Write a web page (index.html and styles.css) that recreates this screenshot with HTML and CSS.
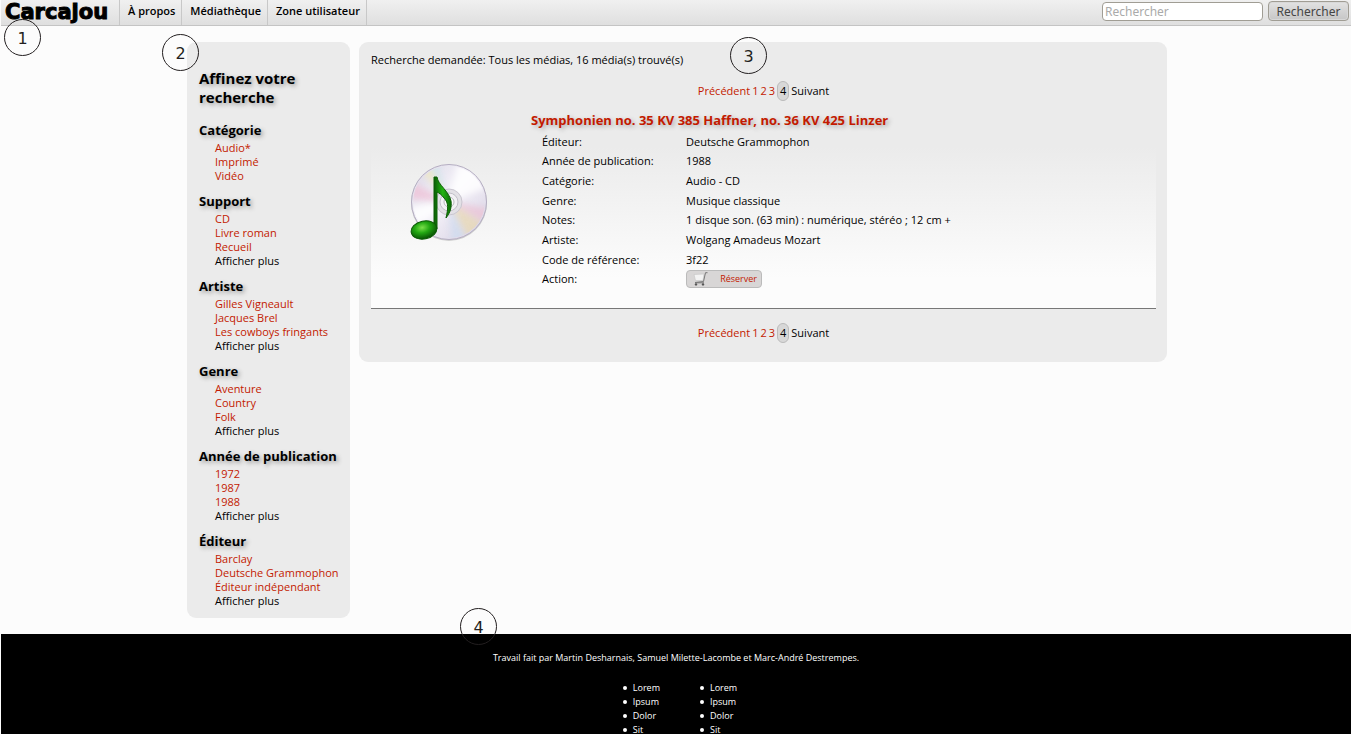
FILE: index.html
```html
<!DOCTYPE html>
<html lang="fr">
<head>
<meta charset="utf-8">
<title>Carcajou - Médiathèque</title>
<link rel="stylesheet" href="styles.css">
</head>
<body>
<header class="topbar">
  <a class="logo" href="#">Carcajou</a>
  <nav class="menu">
    <a href="#">À propos</a>
    <a href="#">Médiathèque</a>
    <a href="#">Zone utilisateur</a>
  </nav>
  <form class="search">
    <input type="search" placeholder="Rechercher" aria-label="Rechercher">
    <button type="button">Rechercher</button>
  </form>
  <span class="pin pin-header">1</span>
</header>

<div class="page">
  <aside class="filters">
    <span class="pin pin-filters">2</span>
    <h2>Affinez votre recherche</h2>
    <section>
      <h3>Catégorie</h3>
      <ul>
        <li><a href="#">Audio*</a></li>
        <li><a href="#">Imprimé</a></li>
        <li><a href="#">Vidéo</a></li>
      </ul>
    </section>
    <section>
      <h3>Support</h3>
      <ul>
        <li><a href="#">CD</a></li>
        <li><a href="#">Livre roman</a></li>
        <li><a href="#">Recueil</a></li>
        <li><a class="more" href="#">Afficher plus</a></li>
      </ul>
    </section>
    <section>
      <h3>Artiste</h3>
      <ul>
        <li><a href="#">Gilles Vigneault</a></li>
        <li><a href="#">Jacques Brel</a></li>
        <li><a href="#">Les cowboys fringants</a></li>
        <li><a class="more" href="#">Afficher plus</a></li>
      </ul>
    </section>
    <section>
      <h3>Genre</h3>
      <ul>
        <li><a href="#">Aventure</a></li>
        <li><a href="#">Country</a></li>
        <li><a href="#">Folk</a></li>
        <li><a class="more" href="#">Afficher plus</a></li>
      </ul>
    </section>
    <section>
      <h3>Année de publication</h3>
      <ul>
        <li><a href="#">1972</a></li>
        <li><a href="#">1987</a></li>
        <li><a href="#">1988</a></li>
        <li><a class="more" href="#">Afficher plus</a></li>
      </ul>
    </section>
    <section>
      <h3>Éditeur</h3>
      <ul>
        <li><a href="#">Barclay</a></li>
        <li><a href="#">Deutsche Grammophon</a></li>
        <li><a href="#">Éditeur indépendant</a></li>
        <li><a class="more" href="#">Afficher plus</a></li>
      </ul>
    </section>
  </aside>

  <main class="results">
    <span class="pin pin-results">3</span>
    <p class="summary">Recherche demandée: Tous les médias, 16 média(s) trouvé(s)</p>
    <nav class="pager" aria-label="Pages">
      <a href="#">Précédent</a><a href="#">1</a><a href="#">2</a><a href="#">3</a><span class="current">4</span><span>Suivant</span>
    </nav>
    <article class="media">
      <div class="cover">
        <svg width="80" height="82" viewBox="0 0 80 82" aria-hidden="true">
          <defs>
            <linearGradient id="disc" x1="0" y1="0" x2="1" y2="1">
              <stop offset="0" stop-color="#d9d5e4"/>
              <stop offset=".45" stop-color="#f6f4fa"/>
              <stop offset="1" stop-color="#d3cce0"/>
            </linearGradient>
            <linearGradient id="note" x1="0" y1="0" x2="1" y2="0">
              <stop offset="0" stop-color="#0b5c05"/>
              <stop offset=".5" stop-color="#22b310"/>
              <stop offset="1" stop-color="#0b6a05"/>
            </linearGradient>
            <radialGradient id="head" cx=".45" cy=".35" r=".65">
              <stop offset="0" stop-color="#7be04a"/>
              <stop offset=".45" stop-color="#22a812"/>
              <stop offset="1" stop-color="#064f03"/>
            </radialGradient>
            <filter id="soft" x="-20%" y="-20%" width="140%" height="140%"><feGaussianBlur stdDeviation="3"/></filter>
            <clipPath id="round"><circle cx="39" cy="39" r="36"/></clipPath>
          </defs>
          <circle cx="39" cy="40" r="38" fill="#000" opacity=".16"/>
          <circle cx="39" cy="39" r="37.500" fill="url(#disc)" stroke="#b5aec2"/>
          <g clip-path="url(#round)"><g filter="url(#soft)" opacity=".8">
            <path d="M39 39 0 18 0 36Z" fill="#eec3d8"/>
            <path d="M39 39 9 5 18 0Z" fill="#f2e9bd"/>
            <path d="M39 39 17 0 27 0Z" fill="#cfe5ec"/>
            <path d="M39 39 48 0 78 8 78 24Z" fill="#fff"/>
            <path d="M39 39 80 46 80 62Z" fill="#ecc4d6"/>
            <path d="M39 39 76 62 60 80Z" fill="#e8d9b6"/>
            <path d="M39 39 58 80 42 80Z" fill="#cfdcef"/>
            <path d="M39 39 0 44 0 66Z" fill="#fff"/>
          </g></g>
          <circle cx="39" cy="39" r="13" fill="#e3e1e6" stroke="#cac6d0"/>
          <circle cx="39" cy="39" r="9" fill="#f2f1f4" stroke="#c2bfc8"/>
          <circle cx="39" cy="39" r="5" fill="#fdfdfd" stroke="#b8b5bd"/>
          <path d="M24 14h3c1 8 12 14 14 24 1 6-1 12-5 17 2-9 3-15-2-20-2-3-5-5-7-6v37h-3Z" fill="url(#note)" stroke="#0c5d06"/>
          <ellipse cx="14" cy="67" rx="13" ry="9" fill="url(#head)" stroke="#0a5a04" transform="rotate(-12 14 67)"/>
        </svg>
      </div>
      <div class="details">
        <h1><a href="#">Symphonien no. 35 KV 385 Haffner, no. 36 KV 425 Linzer</a></h1>
        <table>
          <tr><th scope="row">Éditeur:</th><td>Deutsche Grammophon</td></tr>
          <tr><th scope="row">Année de publication:</th><td>1988</td></tr>
          <tr><th scope="row">Catégorie:</th><td>Audio - CD</td></tr>
          <tr><th scope="row">Genre:</th><td>Musique classique</td></tr>
          <tr><th scope="row">Notes:</th><td>1 disque son. (63 min) : numérique, stéréo ; 12 cm +</td></tr>
          <tr><th scope="row">Artiste:</th><td>Wolgang Amadeus Mozart</td></tr>
          <tr><th scope="row">Code de référence:</th><td>3f22</td></tr>
          <tr><th scope="row">Action:</th><td>
            <button class="reserve" type="button">
              <svg width="15" height="14" viewBox="0 0 15 14" aria-hidden="true">
                <path d="M1 2.500 11 2 10 8.500H2.500Z" fill="#f3f3f3" stroke="#c4c4c4" stroke-width=".6"/>
                <path d="M14.500.7h-2L10.500 9.500 2 10.500M2 10.800h9" fill="none" stroke="#777"/>
                <circle cx="3" cy="12.400" r="1.200" fill="#555"/>
                <circle cx="10" cy="12.400" r="1.200" fill="#555"/>
              </svg>
              Réserver
            </button></td></tr>
        </table>
      </div>
    </article>
    <nav class="pager" aria-label="Pages, bas">
      <a href="#">Précédent</a><a href="#">1</a><a href="#">2</a><a href="#">3</a><span class="current">4</span><span>Suivant</span>
    </nav>
  </main>
</div>

<footer class="footer">
  <span class="pin pin-footer">4</span>
  <p>Travail fait par Martin Desharnais, Samuel Milette-Lacombe et Marc-André Destrempes.</p>
  <div class="columns">
    <ul><li>Lorem</li><li>Ipsum</li><li>Dolor</li><li>Sit</li></ul>
    <ul><li>Lorem</li><li>Ipsum</li><li>Dolor</li><li>Sit</li></ul>
  </div>
</footer>
</body>
</html>
```
FILE: styles.css
```css
* { box-sizing: border-box; }

body {
  margin: 0;
  padding-left: 1px;
  background: #fcfcfc;
  color: #000;
  font: 11px/14px "Trebuchet MS", "Open Sans", sans-serif;
}

h1, h2, h3, p, ul { margin: 0; padding: 0; }
a { color: #c31a00; text-decoration: none; }

.topbar {
  position: relative;
  display: flex;
  align-items: stretch;
  height: 26px;
  border-bottom: 1px solid #c4c4c4;
  background: linear-gradient(#f0f0f0, #dfdfdf);
}
.logo {
  width: 119px;
  padding-left: 4px;
  border-right: 1px solid #c8c8c8;
  color: #000;
  font: bold 21px/24px "DejaVu Sans", sans-serif;
  -webkit-text-stroke: 1px #000;
}
.menu { display: flex; }
.menu a {
  padding: 0 6px 0 8px;
  border-right: 1px solid #c8c8c8;
  color: #000;
  font-weight: 600;
  line-height: 22px;
}
.search {
  display: flex;
  gap: 5px;
  margin-left: auto;
  padding: 1px 2px 3px 0;
}
.search input, .search button {
  border: 1px solid #a09d94;
  border-radius: 4px;
  font: 12px/16px "Noto Sans", sans-serif;
}
.search input {
  width: 161px;
  height: 19px;
  margin-top: 1px;
  padding: 0 2px;
  background: #fff;
}
.search input::placeholder { color: #aaa; }
.search button {
  width: 81px;
  height: 20px;
  padding: 1px 0 0;
  background: linear-gradient(#e2e2e2, #c6c6c6);
  box-shadow: inset 0 0 0 1px #d8d8d8;
  color: #444;
}

.page {
  display: flex;
  align-items: flex-start;
  gap: 9px;
  max-width: 982px;
  margin: 16px auto;
  padding-left: 2px;
}
.filters, .results {
  position: relative;
  border-radius: 9px;
  background: #ebebeb;
}
.filters {
  flex: 0 0 163px;
  min-width: 0;
  padding: 27px 12px 10px;
}
.filters h2 {
  margin-bottom: 15px;
  font-size: 15px;
  line-height: 19px;
  text-shadow: 2px 2px 4px #999;
}
.filters h3 {
  margin-bottom: 3px;
  font-size: 13px;
  line-height: 16px;
  white-space: nowrap;
  text-shadow: 2px 2px 4px #999;
}
.filters section + section { margin-top: 10px; }
.filters ul { padding-left: 16px; list-style: none; white-space: nowrap; }
.filters .more { color: #000; }

.results {
  flex: 1;
  padding: 11px 11px 19px 12px;
}
.pager {
  display: flex;
  justify-content: center;
  align-items: center;
  gap: 2px;
  height: 20px;
}
.summary + .pager { margin: 14px 0 6px; }
.media + .pager { margin-top: 14px; }
.current {
  padding: 2px;
  border: 1px solid #bbb;
  border-radius: 6px;
  background: #d8d8d8;
}

.media {
  display: grid;
  grid-template-columns: 160px 1fr;
  padding: 5px 0 19px;
  border-bottom: 1px solid #777;
  background: linear-gradient(#ebebeb 20%, #fcfcfc 85%);
}
.cover { padding: 51px 0 0 39px; }
.details h1 {
  font-size: 13px;
  line-height: 16px;
  margin-bottom: 4px;
  text-shadow: 2px 2px 4px #aaa;
}
.details table {
  height: 157px;
  margin-left: 11px;
  border-collapse: collapse;
}
.details th {
  width: 144px;
  height: 19px;
  padding: 0;
  font-weight: normal;
  text-align: left;
}
.details td { padding: 0; }
.reserve {
  display: flex;
  align-items: center;
  justify-content: space-between;
  width: 76px;
  height: 18px;
  padding: 0 4px 0 6px;
  border: 1px solid #bbb;
  border-radius: 4px;
  background: #d8d6d6;
  color: #c31a00;
  font: 9px/14px "Trebuchet MS", "Open Sans", sans-serif;
}

.footer {
  position: relative;
  padding-top: 17px;
  background: #000;
  color: #fff;
  font-size: 9px;
}
.footer p { text-align: center; }
.columns {
  display: flex;
  justify-content: center;
  gap: 40px;
  padding: 16px 0 0 8px;
}
.columns ul { list-style: none; }
.columns li {
  display: flex;
  align-items: center;
  gap: 6px;
}
.columns li::before {
  content: "";
  width: 4px;
  height: 4px;
  border-radius: 50%;
  background: #fff;
}

.pin {
  position: absolute;
  z-index: 1;
  width: 37px;
  height: 37px;
  border: 1px solid #231f20;
  border-radius: 50%;
  color: #231f20;
  font: 16px/37px "DejaVu Sans", sans-serif;
  text-align: center;
}
.pin-header { top: 19px; left: 3px; }
.pin-filters { top: -8px; left: -25px; }
.pin-results { top: -5px; left: 371px; }
.pin-footer { top: -26px; left: 34%; }
```
